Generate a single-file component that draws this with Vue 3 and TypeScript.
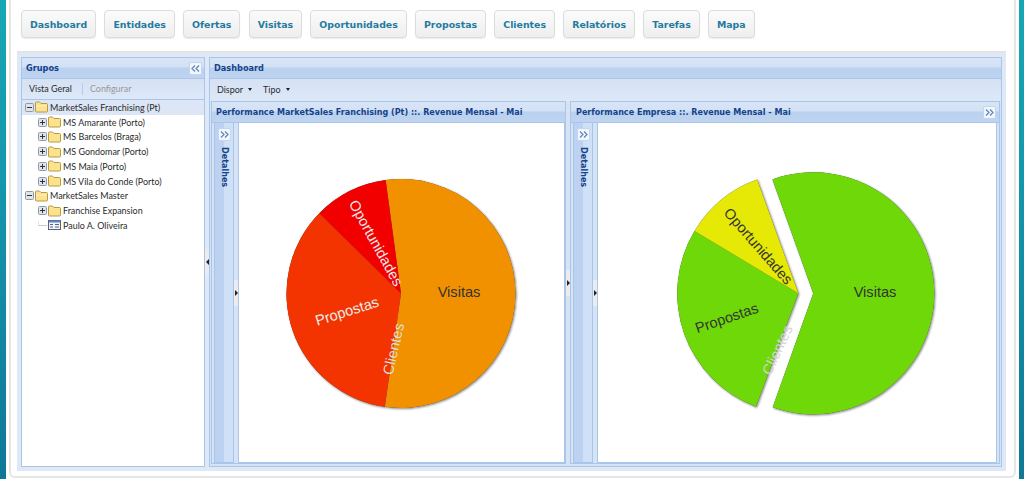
<script setup lang="ts">
interface Slice {
  cx: number
  cy: number
  r: number
  from: number
  to: number
  color: string
}

interface Label {
  text: string
  x: number
  y: number
  angle: number
  color: string
}

interface Chart {
  title: string
  tool: boolean
  slices: Slice[]
  labels: Label[]
}

interface TreeRow {
  text: string
  level: number
  kind: 'open' | 'closed' | 'leaf'
  selected?: boolean
}

const tabs = ['Dashboard', 'Entidades', 'Ofertas', 'Visitas', 'Oportunidades', 'Propostas', 'Clientes', 'Relatórios', 'Tarefas', 'Mapa']

const tree: TreeRow[] = [
  {text: 'MarketSales Franchising (Pt)', level: 0, kind: 'open', selected: true},
  {text: 'MS Amarante (Porto)', level: 1, kind: 'closed'},
  {text: 'MS Barcelos (Braga)', level: 1, kind: 'closed'},
  {text: 'MS Gondomar (Porto)', level: 1, kind: 'closed'},
  {text: 'MS Maia (Porto)', level: 1, kind: 'closed'},
  {text: 'MS Vila do Conde (Porto)', level: 1, kind: 'closed'},
  {text: 'MarketSales Master', level: 0, kind: 'open'},
  {text: 'Franchise Expansion', level: 1, kind: 'closed'},
  {text: 'Paulo A. Oliveira', level: 1, kind: 'leaf'},
]

const light = '#ececec'
const dark = '#333'

const charts: Chart[] = [
  {
    title: 'Performance MarketSales Franchising (Pt) ::. Revenue Mensal - Mai',
    tool: false,
    slices: [
      {cx: 162, cy: 170.5, r: 114.5, from: -7.7, to: 188.1, color: '#f29100'},
      {cx: 162, cy: 170.5, r: 114.5, from: 188.1, to: 314.5, color: '#f33400'},
      {cx: 162, cy: 170.5, r: 114.5, from: 314.5, to: 352.3, color: '#f20000'},
    ],
    labels: [
      {text: 'Visitas', x: 220, y: 169, angle: 0, color: dark},
      {text: 'Propostas', x: 108, y: 188.2, angle: -17.5, color: light},
      {text: 'Oportunidades', x: 137, y: 120, angle: 61, color: light},
      {text: 'Clientes', x: 154.5, y: 226, angle: -77, color: '#ddd'},
    ],
  },
  {
    title: 'Performance Empresa ::. Revenue Mensal - Mai',
    tool: true,
    slices: [
      {cx: 215.3, cy: 170.3, r: 121, from: -19.7, to: 199.6, color: '#6ed808'},
      {cx: 200.3, cy: 170.3, r: 121, from: 200.5, to: 301, color: '#6ed808'},
      {cx: 200.3, cy: 170.3, r: 121, from: 301, to: 340.1, color: '#e6e805'},
    ],
    labels: [
      {text: 'Visitas', x: 277, y: 169, angle: 0, color: dark},
      {text: 'Propostas', x: 128.7, y: 195, angle: -18.9, color: dark},
      {text: 'Oportunidades', x: 160.3, y: 123.2, angle: 49, color: dark},
      {text: 'Clientes', x: 179.3, y: 227, angle: -65, color: '#d4d4d4'},
    ],
  },
]

const point = (s: Slice, deg: number) => {
  const a = (deg * Math.PI) / 180
  return `${(s.cx + s.r * Math.sin(a)).toFixed(2)} ${(s.cy - s.r * Math.cos(a)).toFixed(2)}`
}

const slicePath = (s: Slice) => {
  const large = s.to - s.from > 180 ? 1 : 0
  return `M${s.cx} ${s.cy}L${point(s, s.from)}A${s.r} ${s.r} 0 ${large} 1 ${point(s, s.to)}Z`
}
</script>

<template>
  <div class="screen">
    <div class="edge"/>
    <div class="page">
      <nav class="tabs">
        <button v-for="tab in tabs" :key="tab" class="tabs__item">{{ tab }}</button>
      </nav>

      <div class="workspace">
        <aside class="panel groups">
          <header class="panel__head">
            <span class="panel__title">Grupos</span>
            <span class="tool">
              <svg width="9" height="7" viewBox="0 0 9 7"><path d="M4 .5 1 3.5l3 3M8 .5 5 3.5l3 3" fill="none" stroke="#5b85b8" stroke-width="1.2"/></svg>
            </span>
          </header>
          <div class="toolbar">
            <span class="toolbar__item">Vista Geral</span>
            <span class="toolbar__sep"/>
            <span class="toolbar__item toolbar__item_off">Configurar</span>
          </div>
          <ul class="tree">
            <li
                v-for="row in tree"
                :key="row.text"
                class="tree__row"
                :class="{
                  'tree__row_selected': row.selected,
                  'tree__row_child': row.level === 1
                }"
            >
              <svg v-if="row.kind !== 'leaf'" class="tree__toggle" width="9" height="9" viewBox="0 0 9 9">
                <rect x=".5" y=".5" width="8" height="8" rx="1" fill="#dfe4ea" stroke="#8f9aa8"/>
                <path d="M2 4.5h5" stroke="#333"/>
                <path v-if="row.kind === 'closed'" d="M4.5 2v5" stroke="#333"/>
              </svg>
              <svg v-else class="tree__toggle" width="9" height="9" viewBox="0 0 9 9">
                <path d="M0 -3v7.5h9" fill="none" stroke="#ccc"/>
              </svg>
              <svg v-if="row.kind === 'leaf'" class="tree__icon" width="13" height="12" viewBox="0 0 13 12">
                <rect x=".5" y="1.5" width="12" height="9" fill="#f2f4f8" stroke="#56657c"/>
                <path d="M1 2.5h11" stroke="#5f86c5" stroke-width="2"/>
                <path d="M2 5.500h3M7 5.500h4M2 8h3M7 8h4" stroke="#56657c"/>
              </svg>
              <svg v-else class="tree__icon" width="13" height="12" viewBox="0 0 13 12">
                <path d="M.5 3V2q0-1 1-1h3l1.5 1.500h5.500q1 0 1 1V10q0 1-1 1h-10q-1 0-1-1Z" fill="#fde28c" stroke="#b59a4c"/>
                <path v-if="row.kind === 'open'" d="M1 5h11" stroke="#fff3bd"/>
              </svg>
              <span class="tree__text">{{ row.text }}</span>
            </li>
          </ul>
        </aside>

        <div class="splitter"><span class="handle"><i class="handle__arrow handle__arrow_left"/></span></div>

        <section class="panel dashboard">
          <header class="panel__head">
            <span class="panel__title">Dashboard</span>
          </header>
          <div class="toolbar toolbar_menus">
            <span class="toolbar__item">Dispor<i class="caret"/></span>
            <span class="toolbar__item">Tipo<i class="caret"/></span>
          </div>
          <div class="charts">
            <template v-for="(chart, index) in charts" :key="chart.title">
              <div v-if="index > 0" class="splitter"><span class="handle"><i class="handle__arrow"/></span></div>
              <article class="chart" :class="{'chart_wide': chart.tool}">
                <header class="chart__head">
                  <span class="chart__title">{{ chart.title }}</span>
                  <span v-if="chart.tool" class="tool">
                    <svg width="9" height="7" viewBox="0 0 9 7"><path d="M1 .5l3 3-3 3M5 .5l3 3-3 3" fill="none" stroke="#5b85b8" stroke-width="1.2"/></svg>
                  </span>
                </header>
                <div class="chart__main">
                  <div class="strip">
                    <span class="tool">
                      <svg width="9" height="7" viewBox="0 0 9 7"><path d="M1 .5l3 3-3 3M5 .5l3 3-3 3" fill="none" stroke="#5b85b8" stroke-width="1.2"/></svg>
                    </span>
                    <span class="strip__text">Detalhes</span>
                  </div>
                  <div class="strip-gap"><span class="handle"><i class="handle__arrow"/></span></div>
                  <div class="chart__body">
                    <svg class="pie">
                      <g class="pie__slices">
                        <path
                            v-for="(slice, i) in chart.slices"
                            :key="i"
                            :d="slicePath(slice)"
                            :fill="slice.color"
                        />
                      </g>
                      <text
                          v-for="label in chart.labels"
                          :key="label.text"
                          class="pie__label"
                          :fill="label.color"
                          :transform="`translate(${label.x} ${label.y}) rotate(${label.angle})`"
                      >{{ label.text }}</text>
                    </svg>
                  </div>
                </div>
              </article>
            </template>
          </div>
        </section>
      </div>
    </div>
    <div class="edge edge_right"/>
  </div>
</template>

<style scoped>
.screen {
  display: flex;
  width: 1024px;
  height: 479px;
  overflow: hidden;
  background: #fff;
}

.edge {
  flex: none;
  width: 6px;
  margin-right: 3px;
  background: linear-gradient(#17a7b4, #1493ab 45%, #0f7896);
}

.edge_right {
  width: 5px;
  margin: 0 0 0 3px;
}

.page {
  flex: 1;
  display: flex;
  flex-direction: column;
  height: 478px;
  padding: 10px 8px 5px 6px;
  box-sizing: border-box;
  border: 2px solid #e6e6e6;
  border-width: 0 2px 2px 2px;
  border-radius: 0 0 6px 6px;
}

.tabs {
  flex: none;
  display: flex;
  gap: 8.2px;
  height: 28px;
  margin-left: 4px;
}

.tabs__item {
  padding: 0 8px;
  height: 28px;
  font-family: "DejaVu Sans", sans-serif;
  font-size: 9.4px;
  font-weight: 700;
  color: #227b9f;
  border: 1px solid #dcdcdc;
  border-radius: 4px;
  background: linear-gradient(#fbfbfb, #eeeeee);
  box-shadow: 0 1px 1px rgba(0, 0, 0, 0.08);
}

.workspace {
  flex: 1;
  display: flex;
  min-height: 0;
  margin-top: 13px;
  padding: 4px;
  border-top: 2px solid #e4e4e4;
  background: #dfe8f6;
}

.panel {
  display: flex;
  flex-direction: column;
  border: 1px solid #a9c5ea;
  box-sizing: border-box;
}

.groups {
  flex: none;
  width: 184px;
}

.dashboard {
  flex: 1;
  min-width: 0;
  background: #d6e3f4;
}

.panel__head {
  flex: none;
  display: flex;
  align-items: center;
  justify-content: space-between;
  height: 20px;
  padding: 0 2px 0 4px;
  border-bottom: 1px solid #a9c5ea;
  background: linear-gradient(#d8e5f7 0, #d3e1f5 45%, #bad1ef 50%, #bed4f0 100%);
}

.panel__title,
.chart__title,
.strip__text {
  font-family: "DejaVu Sans", sans-serif;
  font-size: 8.05px;
  font-weight: 700;
  color: #15428b;
}

.panel__title {
  font-size: 8.2px;
}

.tool {
  display: flex;
  align-items: center;
  justify-content: center;
  flex: none;
  width: 11px;
  height: 11px;
  border: 1px solid #c3d6ef;
  border-radius: 2px;
  background: #f3f7fd;
}

.toolbar {
  flex: none;
  display: flex;
  align-items: center;
  height: 19px;
  padding: 0 0 1px 7px;
  border-bottom: 1px solid #a9c5ea;
  background: linear-gradient(#d5e2f4, #dde8f7);
}

.toolbar_menus {
  gap: 11px;
  height: 20px;
  padding-bottom: 2px;
  border-bottom: 0;
}

.toolbar__item {
  font-family: Lato, sans-serif;
  font-size: 8.95px;
  color: #2b2b2b;
}

.toolbar__item_off {
  color: #999;
}

.toolbar__sep {
  width: 1px;
  height: 12px;
  margin: 0 7px 0 10px;
  background: #b5cdea;
}

.caret {
  display: inline-block;
  margin: 0 0 1px 5px;
  border-top: 3px solid #222;
  border-left: 2.5px solid transparent;
  border-right: 2.5px solid transparent;
  vertical-align: middle;
}

.tree {
  flex: 1;
  margin: 0;
  padding: 0;
  list-style: none;
  background: #fff;
}

.tree__row {
  display: flex;
  align-items: center;
  height: 14.75px;
  padding-left: 3px;
}

.tree__row_child {
  padding-left: 16px;
}

.tree__row_selected {
  background: #dce6f6;
}

.tree__toggle {
  flex: none;
  margin-right: 1px;
}

.tree__icon {
  flex: none;
  margin-right: 2px;
}

.tree__text {
  font-family: Lato, sans-serif;
  font-size: 8.95px;
  white-space: nowrap;
  color: #2b2b2b;
}

.splitter {
  flex: none;
  display: flex;
  align-items: center;
  justify-content: center;
  width: 4px;
}

.handle {
  display: flex;
  flex: none;
  align-items: center;
  justify-content: center;
  width: 4px;
  height: 26px;
  background: #ececec;
}

.handle__arrow {
  display: block;
  border-top: 3px solid transparent;
  border-bottom: 3px solid transparent;
  border-left: 3px solid #222;
}

.handle__arrow_left {
  border-left: 0;
  border-right: 3px solid #222;
}

.charts {
  flex: 1;
  display: flex;
  min-height: 0;
  padding: 0 1px 2px 1px;
}

.chart {
  flex: none;
  display: flex;
  flex-direction: column;
  width: 355px;
  border: 1px solid #a9c5ea;
  box-sizing: border-box;
  background: #d6e3f4;
}

.chart_wide {
  width: 430px;
}

.chart__head {
  flex: none;
  display: flex;
  align-items: center;
  justify-content: space-between;
  height: 20px;
  padding: 0 3px 0 4px;
  border-bottom: 1px solid #a9c5ea;
  background: linear-gradient(#d8e5f7 0, #d3e1f5 45%, #bad1ef 50%, #bed4f0 100%);
}

.chart_wide .chart__head {
  padding-left: 5px;
}

.chart__main {
  flex: 1;
  display: flex;
  min-height: 0;
  padding-left: 2px;
}

.chart_wide .chart__main {
  padding-right: 2px;
}

.strip {
  flex: none;
  display: flex;
  flex-direction: column;
  align-items: center;
  gap: 6px;
  width: 20px;
  padding-top: 5px;
  box-sizing: border-box;
  border: 1px solid #a9c5ea;
  border-top: 0;
  background: linear-gradient(90deg, #bcd2f0 50%, #d0e0f6 50%);
}

.strip__text {
  writing-mode: vertical-rl;
}

.strip-gap {
  flex: none;
  display: flex;
  align-items: center;
  width: 4px;
}

.chart__body {
  flex: 1;
  min-width: 0;
  border: 1px solid #a9c5ea;
  border-top: 0;
  background: #fff;
}

.pie {
  display: block;
  width: 100%;
  height: 100%;
}

.pie__slices {
  filter: drop-shadow(0 0 0.6px #444) drop-shadow(1px 1px 1px rgba(0, 0, 0, 0.45));
}

.pie__label {
  font-family: "Liberation Sans", Arial, sans-serif;
  font-size: 14.6px;
  text-anchor: middle;
  dominant-baseline: central;
}
</style>
